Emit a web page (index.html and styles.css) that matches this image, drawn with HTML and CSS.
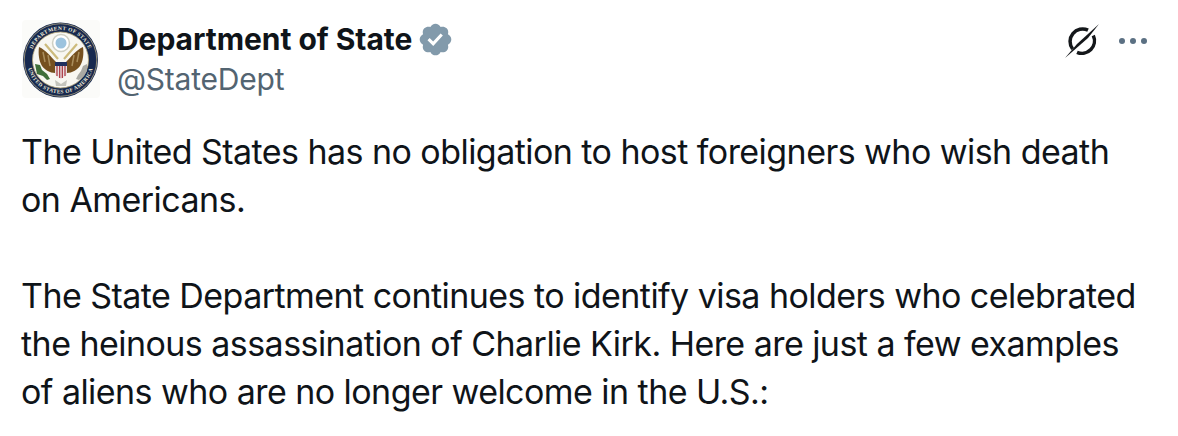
FILE: index.html
```html
<!DOCTYPE html>
<html lang="en">
<head>
    <meta charset="UTF-8">
    <title>Department of State post</title>
    <link rel="stylesheet" href="styles.css">
</head>
<body>
    <article class="post">
        <header class="post-head">
            <svg class="avatar" viewBox="0 0 78 78" width="78" height="78" aria-hidden="true">
                <defs>
                    <path id="ring-top" d="M8.500 40a30 30 0 0 1 60 0"/>
                    <path id="ring-bottom" d="M5 40a33.500 33.500 0 0 0 67 0"/>
                </defs>
                <rect width="78" height="78" rx="4" fill="#fbfbf9"/>
                <circle cx="38.500" cy="40" r="37.500" fill="#17294f"/>
                <circle cx="38.500" cy="40" r="36.300" fill="none" stroke="#c9b98a" stroke-width=".7"/>
                <circle cx="38.500" cy="40" r="28" fill="#f8f7f1" stroke="#b9a878" stroke-width=".8"/>
                <text class="seal-text"><textPath href="#ring-top" startOffset="50%" text-anchor="middle">DEPARTMENT OF STATE</textPath></text>
                <text class="seal-text"><textPath href="#ring-bottom" startOffset="50%" text-anchor="middle">UNITED STATES OF AMERICA</textPath></text>
                <circle cx="39" cy="23" r="8.500" fill="#fff" stroke="#cfcfc2" stroke-width="1.500"/>
                <circle cx="39" cy="23" r="5.500" fill="#9cc3de"/>
                <path d="M34 42C29 37 24 30 17 27c-1 7 0 14 3 19 3 4 8 7 13 7z" fill="#75501f"/>
                <path d="M44 42c5-5 10-12 17-15 1 7 0 14-3 19-3 4-8 7-13 7z" fill="#75501f"/>
                <path d="M21 32l2 10M26 35l2 11M57 32l-2 10M52 35l-2 11" stroke="#a98d5c" stroke-width="1.500"/>
                <path d="M23 24l13 15M55 24L42 39" stroke="#cdbb7c" stroke-width="2.200"/>
                <path d="M33 42h12v4H33z" fill="#20305e"/>
                <path d="M33 46h12v7c0 3-3 4-6 6-3-2-6-3-6-6z" fill="#e9dfe0"/>
                <path d="M35 46v10M37.700 46v12M40.300 46v12M43 46v10" stroke="#a8323c" stroke-width="1.200"/>
                <path d="M13 44l5 1 2 5 5 4 3 5-3 1-4-4-6-2z" fill="#3f6f3a"/>
                <path d="M65 44l-4 2-2 5-3 4-2 4 3 1 5-4 3-5z" fill="#a9a9a3"/>
                <path d="M33 60l6 4 6-4-1 6h-10z" fill="#c4c4bc"/>
            </svg>
            <div class="names">
                <div class="name-row">
                    <span class="name">Department of State</span>
                    <svg class="badge" viewBox="0 0 24 24" width="37" height="37" aria-hidden="true">
                        <path fill="#829aab" d="M22.250 12c0-1.430-.880-2.670-2.190-3.340.460-1.390.200-2.900-.810-3.910s-2.520-1.270-3.910-.810c-.660-1.310-1.910-2.190-3.340-2.190s-2.670.880-3.330 2.190c-1.400-.460-2.910-.200-3.920.810s-1.260 2.520-.800 3.910C2.630 9.330 1.750 10.570 1.750 12s.880 2.670 2.200 3.340c-.460 1.390-.210 2.900.800 3.910s2.520 1.260 3.910.810c.670 1.310 1.910 2.190 3.340 2.190s2.680-.880 3.340-2.190c1.390.450 2.900.200 3.910-.810s1.270-2.520.810-3.910c1.310-.670 2.190-1.910 2.190-3.340z"/>
                        <path fill="#fff" d="M10.540 16.210l-3.740-3.740 1.410-1.420 2.260 2.270 4.840-5.270 1.470 1.350z"/>
                    </svg>
                </div>
                <div class="handle">@StateDept</div>
            </div>
            <div class="actions">
                <svg class="grok" viewBox="0 0 36 36" width="36" height="36" aria-hidden="true">
                    <path d="M24 7.200A12.500 12.500 0 0 0 8.600 26M13 29.300A12.500 12.500 0 0 0 29.300 12.600" fill="none" stroke="#14171a" stroke-width="3.500"/>
                    <path d="M35 1L24 15 8 29 1 35 13 21z" fill="#14171a"/>
                </svg>
                <div class="dots"><span></span><span></span><span></span></div>
            </div>
        </header>
        <div class="post-body">
            <p>The United States has no obligation to host foreigners who wish death<br>on Americans.</p>
            <p>The State Department continues to identify visa holders who celebrated<br>the heinous assassination of Charlie Kirk. Here are just a few examples<br>of aliens who are no longer welcome in the U.S.:</p>
        </div>
    </article>
</body>
</html>
```

FILE: styles.css
```css
* {
    margin: 0;
    padding: 0;
    box-sizing: border-box;
}

body {
    background: #fff;
    color: #0f1419;
    font-family: Inter, "Liberation Sans", sans-serif;
    overflow: hidden;
}

.post {
    padding: 20px 31px 0 22px;
}

.post-head {
    display: flex;
    align-items: flex-start;
}

.avatar {
    flex: none;
}

.seal-text {
    font-family: "Liberation Serif", serif;
    font-size: 5.400px;
    font-weight: 700;
    fill: #f0ecd8;
    letter-spacing: .4px;
}

.names {
    margin-left: 17px;
    flex: 1;
}

.name-row {
    display: flex;
    align-items: center;
    height: 38px;
}

.name {
    font-size: 30px;
    font-weight: 700;
    letter-spacing: -.05px;
}

.badge {
    margin-left: 5px;
}

.handle {
    margin-top: 2px;
    font-size: 30px;
    line-height: 38px;
    letter-spacing: -.2px;
    color: #536471;
}

.actions {
    display: flex;
    align-items: center;
    margin-top: 3px;
}

.dots {
    display: flex;
    gap: 5px;
    margin-left: 19px;
}

.dots span {
    width: 6px;
    height: 6px;
    border-radius: 50%;
    background: #5b7083;
}

.post-body {
    margin: 30px 0 0 -1px;
    font-size: 34px;
    line-height: 48px;
    letter-spacing: -.55px;
}

.post-body p + p {
    margin-top: 48px;
}
```
